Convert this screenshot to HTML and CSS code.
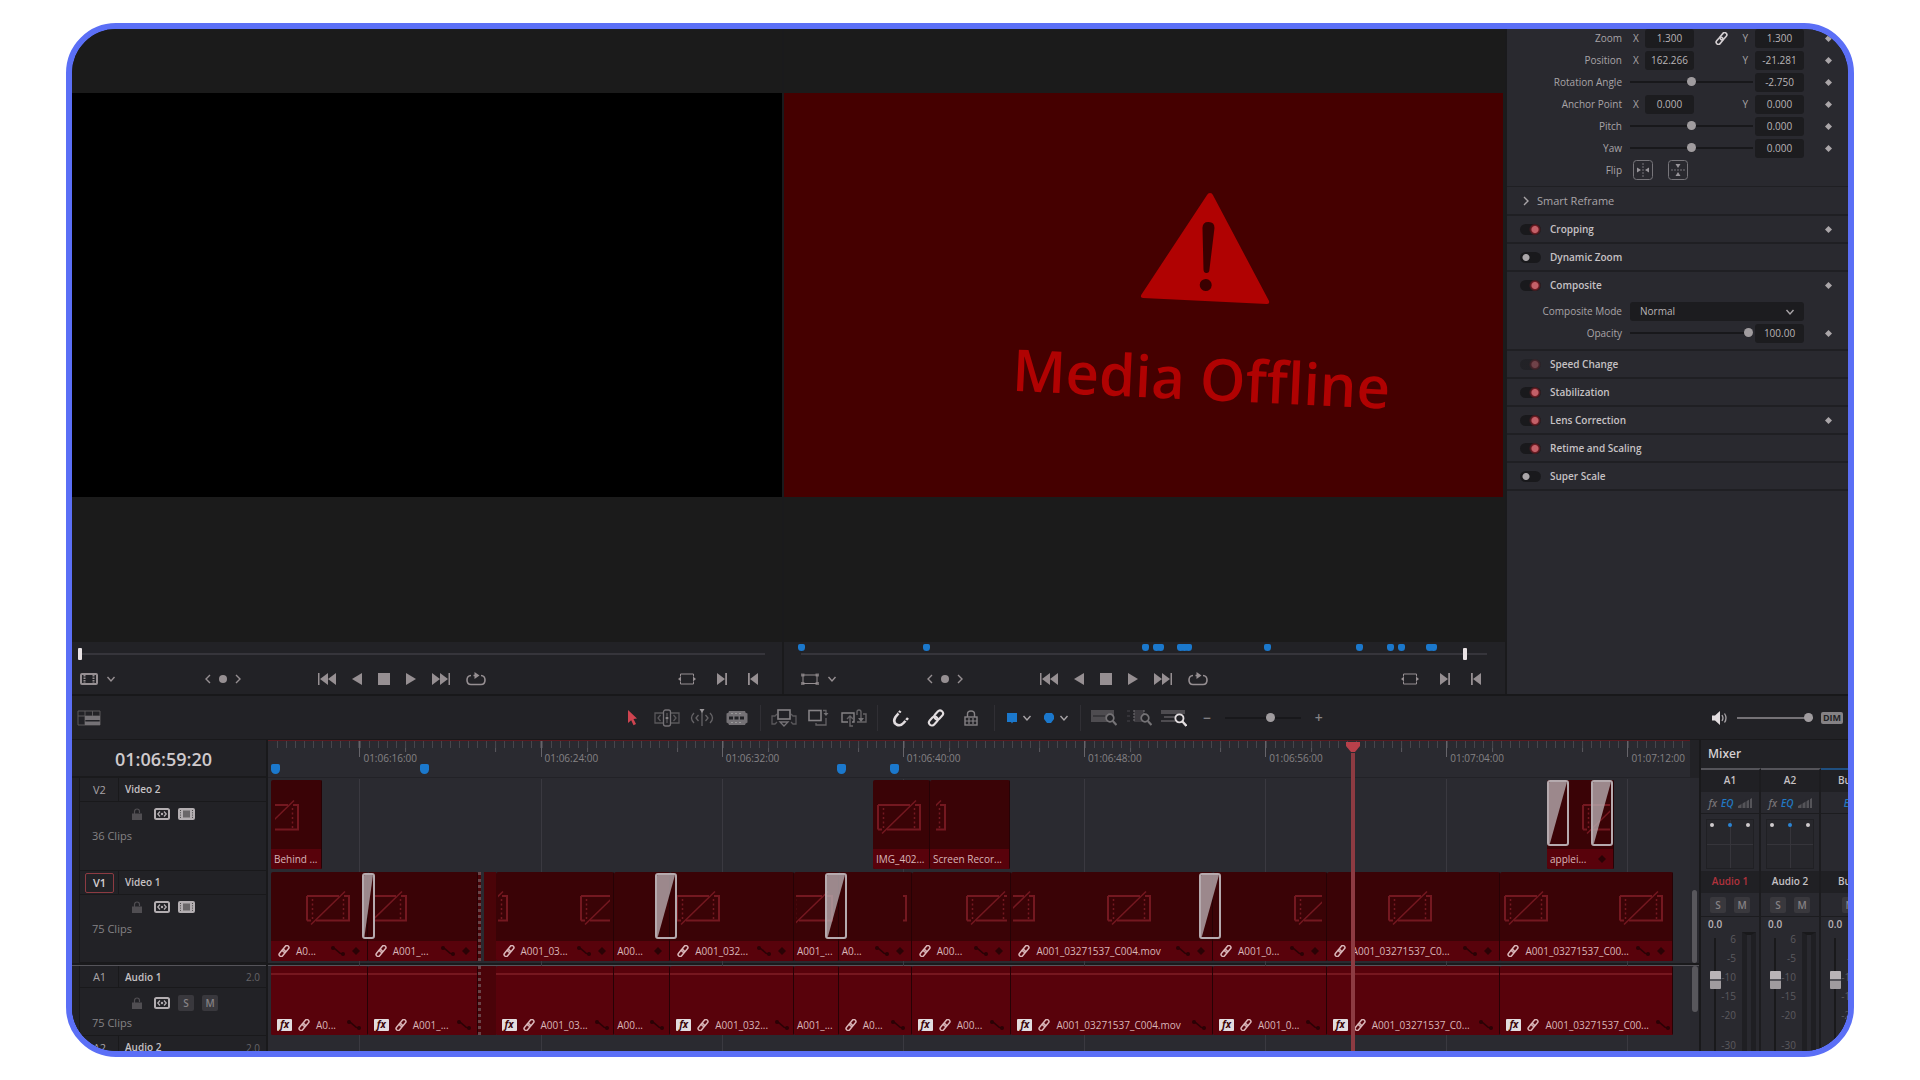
FILE: index.html
```html
<!DOCTYPE html>
<html lang="en">
<head>
<meta charset="utf-8">
<meta name="viewport" content="width=device-width, initial-scale=1">
<title>Edit page</title>
<link rel="stylesheet" href="styles.css">
</head>
<body>
<svg class="defs" aria-hidden="true">
  <defs>
    <symbol id="i-link" viewBox="0 0 12 12"><g fill="none" stroke="currentColor" stroke-width="1.500" transform="rotate(-50 6 6)"><rect x="-.5" y="4" width="7.500" height="4" rx="2"/><rect x="5" y="4" width="7.500" height="4" rx="2"/></g></symbol>
    <symbol id="i-curve" viewBox="0 0 16 12"><path d="M2 3c6 0 5 6 11 6" fill="none" stroke="currentColor" stroke-width="1.500"/><circle cx="3" cy="3" r="2"/><circle cx="13" cy="9" r="2"/></symbol>
    <symbol id="i-key" viewBox="0 0 10 10"><path d="M5 0l5 5-5 5-5-5z" fill="currentColor"/></symbol>
    <symbol id="i-chev" viewBox="0 0 10 10"><path d="M1.500 3L5 7l3.500-4" fill="none" stroke="currentColor" stroke-width="1.400"/></symbol>
    <symbol id="i-left" viewBox="0 0 6 10"><path d="M5 1L1 5l4 4" fill="none" stroke="currentColor" stroke-width="1.400"/></symbol>
    <symbol id="i-right" viewBox="0 0 6 10"><path d="M1 1l4 4-4 4" fill="none" stroke="currentColor" stroke-width="1.400"/></symbol>
    <symbol id="i-first" viewBox="0 0 18 12"><path d="M0 0h1.500v12H0zM10 0v12L2 6zM18 0v12l-8-6z" fill="currentColor"/></symbol>
    <symbol id="i-last" viewBox="0 0 18 12"><path d="M16.500 0H18v12h-1.500zM0 0l8 6-8 6zM8 0l8 6-8 6z" fill="currentColor"/></symbol>
    <symbol id="i-back" viewBox="0 0 10 12"><path d="M10 0v12L0 6z" fill="currentColor"/></symbol>
    <symbol id="i-play" viewBox="0 0 10 12"><path d="M0 0l10 6-10 6z" fill="currentColor"/></symbol>
    <symbol id="i-stop" viewBox="0 0 12 12"><path d="M0 0h12v12H0z" fill="currentColor"/></symbol>
    <symbol id="i-loop" viewBox="0 0 20 14"><path d="M5 3.500C2.500 3.500 1 5.500 1 8s1.500 4.500 4 4.500h10c2.500 0 4-2 4-4.500s-1.500-4.500-4-4.500M9.500 3.500h-2" fill="none" stroke="currentColor" stroke-width="1.600"/><path d="M8.500 0l5 3.500-5 3.500z" fill="currentColor"/></symbol>
    <symbol id="i-match" viewBox="0 0 18 12"><path d="M2.500 3.500V1h13v2.500M2.500 8.500V11h13V8.500" fill="none" stroke="currentColor"/><path d="M0 6l3-2.500v5zM18 6l-3-2.500v5z" fill="currentColor"/></symbol>
    <symbol id="i-out" viewBox="0 0 10 12"><path d="M0 0l8 6-8 6zM8.200 0H10v12H8.200z" fill="currentColor"/></symbol>
    <symbol id="i-in" viewBox="0 0 10 12"><path d="M10 0v12L2 6zM0 0h1.800v12H0z" fill="currentColor"/></symbol>
    <symbol id="i-film" viewBox="0 0 18 12"><rect x="1" y="1" width="16" height="10" rx="1" fill="none" stroke="currentColor" stroke-width="2"/><path d="M4.500 2v8M13.500 2v8" stroke="currentColor" stroke-width="2" stroke-dasharray="1.500 1"/></symbol>
    <symbol id="i-frame" viewBox="0 0 18 12"><rect x="2" y="2" width="14" height="8.500" fill="none" stroke="currentColor"/><path d="M0 .5h3.500v3H0zM14.500 .5H18v3h-3.500zM0 9h3.500v3H0zM14.500 9H18v3h-3.500z" fill="currentColor" opacity=".7"/></symbol>
    <symbol id="i-lock" viewBox="0 0 10 12"><path d="M2.500 6V3.500a2.500 2.500 0 0 1 5 0V5" fill="none" stroke="currentColor" stroke-width="1.200"/><path d="M0 5.500h10V12H0z" fill="currentColor"/></symbol>
    <symbol id="i-auto" viewBox="0 0 16 12"><rect x="1" y="1" width="14" height="10" rx="1.500" fill="none" stroke="currentColor" stroke-width="2"/><path d="M6 3.500L3.800 6 6 8.500M10 3.500L12.200 6 10 8.500" fill="none" stroke="currentColor" stroke-width="1.300"/><circle cx="8" cy="6" r="1.200" fill="currentColor"/></symbol>
    <symbol id="i-clip" viewBox="0 0 17 12"><rect width="17" height="12" rx="2" fill="currentColor"/><path d="M5 2.500h7v7H5z" fill="#6a6769"/><path d="M2.500 2v8M14.500 2v8" stroke="#4a4848" stroke-dasharray="1 1.300"/></symbol>
    <symbol id="i-zoomglass" viewBox="0 0 12 14"><circle cx="5" cy="5" r="3.800" fill="#222226" stroke="currentColor" stroke-width="1.700"/><path d="M7.800 8L11.500 12" stroke="currentColor" stroke-width="2.200"/></symbol>
    <g id="offline" fill="none" stroke="#741820" stroke-width="2"><path d="M1 6h32M38 6h5v24.500H10M1 30.500V6M1 30.500h4"/><path d="M5 34.500L39 1.500" stroke-width="1.500"/><path d="M6.500 9v20M37.500 9v20" stroke-width="1.500" stroke-dasharray="2 2.500"/></g>
    <g id="fade"><path d="M0 0h22L1 66H0z" fill="#b5aaae" fill-opacity=".8"/></g>
  </defs>
</svg>

<main class="app">
  <div class="upper">
    <section class="viewer" aria-label="Source viewer">
      <div class="stage"><div class="gap-top"></div><div class="picture"></div><div class="gap-bottom"></div></div>
      <div class="controls">
        <div class="scrub"><input type="range" min="0" max="1000" value="0" aria-label="Source position"></div>
        <div class="transport">
          <div class="set tight"><button aria-label="Clip view"><svg width="18" height="12"><use href="#i-film"/></svg></button><button aria-label="View menu"><svg width="10" height="10"><use href="#i-chev"/></svg></button></div>
          <i class="sp a"></i>
          <div class="set jog"><button aria-label="Previous"><svg width="6" height="10"><use href="#i-left"/></svg></button><span class="dot"></span><button aria-label="Next"><svg width="6" height="10"><use href="#i-right"/></svg></button></div>
          <i class="sp b"></i>
          <div class="set play"><button aria-label="First frame"><svg width="18" height="12"><use href="#i-first"/></svg></button><button aria-label="Reverse"><svg width="10" height="12"><use href="#i-back"/></svg></button><button aria-label="Stop"><svg width="12" height="12"><use href="#i-stop"/></svg></button><button aria-label="Play"><svg width="10" height="12"><use href="#i-play"/></svg></button><button aria-label="Last frame"><svg width="18" height="12"><use href="#i-last"/></svg></button><button aria-label="Loop"><svg width="20" height="14"><use href="#i-loop"/></svg></button></div>
          <i class="sp c"></i>
          <div class="set marks"><button aria-label="Match frame"><svg width="18" height="12"><use href="#i-match"/></svg></button><button aria-label="Mark in"><svg width="10" height="12"><use href="#i-out"/></svg></button><button aria-label="Mark out"><svg width="10" height="12"><use href="#i-in"/></svg></button></div>
        </div>
      </div>
    </section>

    <section class="viewer program" aria-label="Timeline viewer">
      <div class="stage"><div class="gap-top"></div>
        <div class="picture">
          <div class="warning">
            <svg width="130" height="110" viewBox="0 0 130 110"><path d="M65 1q2 0 3 2l61 103q1 3-2 3H3q-3 0-2-3L62 3q1-2 3-2z" fill="#b00202"/><path d="M59 36q0-6 6-6t6 6l-3 41q0 4-3 4t-3-4z" fill="#3a0000"/><circle cx="65" cy="93" r="6" fill="#3a0000"/></svg>
            <p>Media Offline</p>
          </div>
        </div>
        <div class="gap-bottom"></div></div>
      <div class="controls">
        <div class="scrub">
          <input type="range" min="0" max="1000" value="970" aria-label="Timeline position">
          <i class="mk" style="left:0%"></i><i class="mk" style="left:18.200%"></i><i class="mk" style="left:50.200%"></i><i class="mk" style="left:51.700%"></i><i class="mk" style="left:52.400%"></i><i class="mk" style="left:55.200%"></i><i class="mk" style="left:55.900%"></i><i class="mk" style="left:56.400%"></i><i class="mk" style="left:67.900%"></i><i class="mk" style="left:81.300%"></i><i class="mk" style="left:85.900%"></i><i class="mk" style="left:87.400%"></i><i class="mk" style="left:91.600%"></i><i class="mk" style="left:92.200%"></i>
        </div>
        <div class="transport">
          <div class="set tight"><button aria-label="Transform"><svg width="18" height="12"><use href="#i-frame"/></svg></button><button aria-label="View menu"><svg width="10" height="10"><use href="#i-chev"/></svg></button></div>
          <i class="sp a"></i>
          <div class="set jog"><button aria-label="Previous"><svg width="6" height="10"><use href="#i-left"/></svg></button><span class="dot"></span><button aria-label="Next"><svg width="6" height="10"><use href="#i-right"/></svg></button></div>
          <i class="sp b"></i>
          <div class="set play"><button aria-label="First frame"><svg width="18" height="12"><use href="#i-first"/></svg></button><button aria-label="Reverse"><svg width="10" height="12"><use href="#i-back"/></svg></button><button aria-label="Stop"><svg width="12" height="12"><use href="#i-stop"/></svg></button><button aria-label="Play"><svg width="10" height="12"><use href="#i-play"/></svg></button><button aria-label="Last frame"><svg width="18" height="12"><use href="#i-last"/></svg></button><button aria-label="Loop"><svg width="20" height="14"><use href="#i-loop"/></svg></button></div>
          <i class="sp c"></i>
          <div class="set marks"><button aria-label="Match frame"><svg width="18" height="12"><use href="#i-match"/></svg></button><button aria-label="Mark in"><svg width="10" height="12"><use href="#i-out"/></svg></button><button aria-label="Mark out"><svg width="10" height="12"><use href="#i-in"/></svg></button></div>
        </div>
      </div>
    </section>

    <aside class="inspector" aria-label="Inspector">
      <div class="params first">
        <div class="row"><label for="zx">Zoom</label><span>X</span><input id="zx" value="1.300"><span class="mid"><svg width="13" height="13"><use href="#i-link"/></svg>Y</span><input value="1.300" aria-label="Zoom Y"><svg class="kf" width="7" height="7"><use href="#i-key"/></svg></div>
        <div class="row"><label for="px">Position</label><span>X</span><input id="px" value="162.266"><span class="mid">Y</span><input value="-21.281" aria-label="Position Y"><svg class="kf" width="7" height="7"><use href="#i-key"/></svg></div>
        <div class="row"><label for="ra">Rotation Angle</label><input type="range" id="ra"><input value="-2.750" aria-label="Rotation Angle value"><svg class="kf" width="7" height="7"><use href="#i-key"/></svg></div>
        <div class="row"><label for="ax">Anchor Point</label><span>X</span><input id="ax" value="0.000"><span class="mid">Y</span><input value="0.000" aria-label="Anchor Point Y"><svg class="kf" width="7" height="7"><use href="#i-key"/></svg></div>
        <div class="row"><label for="pi">Pitch</label><input type="range" id="pi"><input value="0.000" aria-label="Pitch value"><svg class="kf" width="7" height="7"><use href="#i-key"/></svg></div>
        <div class="row"><label for="ya">Yaw</label><input type="range" id="ya"><input value="0.000" aria-label="Yaw value"><svg class="kf" width="7" height="7"><use href="#i-key"/></svg></div>
        <div class="row"><span class="lbl">Flip</span><div class="flips">
          <button aria-label="Flip horizontal"><svg width="20" height="20" viewBox="0 0 20 20"><rect x=".5" y=".5" width="19" height="19" rx="3" fill="none" stroke="#77757a"/><path d="M10 3v14" stroke="#77757a" stroke-dasharray="2 1"/><path d="M4 7.500L8 10l-4 2.500zM16 7.500L12 10l4 2.500z" fill="#98959a"/></svg></button>
          <button aria-label="Flip vertical"><svg width="20" height="20" viewBox="0 0 20 20"><rect x=".5" y=".5" width="19" height="19" rx="3" fill="none" stroke="#77757a"/><path d="M3 10h14" stroke="#77757a" stroke-dasharray="2 1"/><path d="M7.500 4L10 8l2.500-4zM7.500 16L10 12l2.500 4z" fill="#98959a"/></svg></button></div></div>
      </div>
      <div class="head reframe"><svg width="6" height="10"><use href="#i-right"/></svg>Smart Reframe</div>
      <div class="head"><label><input type="checkbox" checked>Cropping</label><svg class="kf" width="7" height="7"><use href="#i-key"/></svg></div>
      <div class="head"><label><input type="checkbox">Dynamic Zoom</label></div>
      <div class="head"><label><input type="checkbox" checked>Composite</label><svg class="kf" width="7" height="7"><use href="#i-key"/></svg></div>
      <div class="params">
        <div class="row"><label for="cm">Composite Mode</label><div class="pick"><select id="cm"><option>Normal</option></select><svg width="10" height="10"><use href="#i-chev"/></svg></div></div>
        <div class="row"><label for="op">Opacity</label><input type="range" id="op" value="100"><input value="100.00" aria-label="Opacity value"><svg class="kf" width="7" height="7"><use href="#i-key"/></svg></div>
      </div>
      <div class="head"><label><input type="checkbox" class="dim" checked>Speed Change</label></div>
      <div class="head"><label><input type="checkbox" checked>Stabilization</label></div>
      <div class="head"><label><input type="checkbox" checked>Lens Correction</label><svg class="kf" width="7" height="7"><use href="#i-key"/></svg></div>
      <div class="head"><label><input type="checkbox" checked>Retime and Scaling</label></div>
      <div class="head last"><label><input type="checkbox">Super Scale</label></div>
    </aside>
  </div>

  <div class="toolbar">
    <button aria-label="Timeline view options"><svg width="24" height="16" viewBox="0 0 24 16"><path d="M1 1h22v14H1zM1 6h22M8 1v14M15.500 1v5" fill="none" stroke="#5a585b"/><path d="M8 6h15v4H8zM8 11.500h15V15H8z" fill="#757276"/></svg></button>
    <i class="sp l"></i>
    <div class="tools">
      <button aria-label="Selection"><svg width="24" height="20" viewBox="0 0 24 20"><path d="M8 2l9 8.500-3.500.5 2.500 5-2.500 1.300-2.300-5L8 15z" fill="#cf4450"/></svg></button>
      <button aria-label="Trim"><svg width="26" height="18" viewBox="0 0 26 18"><g fill="none" stroke="#5a585b" stroke-width="1.300"><path d="M9 4H1v10h8M17 4h8v10h-8"/><rect x="9.500" y="1" width="7" height="16" rx="2" stroke="#757276"/><path d="M6.500 6L4 9l2.500 3M19.500 6L22 9l-2.500 3M13 4v3M13 11v3"/></g><circle cx="13" cy="9" r="1.500" fill="#858285"/></svg></button>
      <button aria-label="Dynamic trim"><svg width="24" height="18" viewBox="0 0 24 18"><g fill="none" stroke="#656366" stroke-width="1.300"><path d="M4 4Q-1 9 4 14M20 4q5 5 0 10M12 3v14M8.500 6L6 9l2.500 3M15.500 6L18 9l-2.500 3"/></g><path d="M9.500 0h5L12 4z" fill="#9a979a"/></svg></button>
      <button aria-label="Razor"><svg width="22" height="14" viewBox="0 0 22 14"><path d="M3 0h16q0 2 2.500 2.500v9Q19 12 19 14H3q0-2-2.500-2.500v-9Q3 2 3 0z" fill="#757276"/><path d="M3 7h16" stroke="#222226" stroke-width="3" stroke-dasharray="4 1.500"/><path d="M5 2.500h12M5 11.500h12" stroke="#999" stroke-dasharray="2 2"/></svg></button>
      <i class="rule"></i>
      <button aria-label="Insert clip"><svg width="26" height="18" viewBox="0 0 26 18"><g fill="none" stroke="#5a585b" stroke-width="1.300"><path d="M6 5l-2 2H1v8h3l2-2M20 5l2 2h3v8h-3l-2-2"/><rect x="7" y="1" width="12" height="9" stroke="#858285" stroke-width="1.600"/><path d="M9 13h8l-4 4z" stroke="#757276"/></g></svg></button>
      <button aria-label="Overwrite clip"><svg width="22" height="18" viewBox="0 0 22 18"><g fill="none" stroke="#656366" stroke-width="1.300"><rect x="1" y="1.500" width="12" height="10" stroke="#858285" stroke-width="1.600"/><path d="M18 9v7H8v-2M15 1.500h3v3"/></g><path d="M15.500 4h5L18 7z" fill="#757376"/></svg></button>
      <button aria-label="Replace clip"><svg width="26" height="18" viewBox="0 0 26 18"><g fill="none" stroke="#656366" stroke-width="1.400"><path d="M7 13H1V4h12v9h-2" stroke="#858285"/><path d="M16 6V3q0-2 2-2t2 2v7M16 13h9V5h-3"/><path d="M6 10l3-3 3 3M9 8v9h3"/></g><path d="M17 9h6l-3 4z" fill="#757376"/></svg></button>
      <i class="rule"></i>
      <button aria-label="Snapping"><svg width="18" height="18" viewBox="0 0 18 18"><path d="M8.500 2L3.500 8q-3 5 1 7.500 4 2 7-1.500L16 9" fill="none" stroke="#e2dddf" stroke-width="2.600"/><path d="M6 3.500l3.500 2M12.500 10.500l3 2" stroke="#222226" stroke-width="1.200"/></svg></button>
      <button aria-label="Linked selection"><svg width="18" height="18" viewBox="0 0 18 18"><g fill="none" stroke="#e2dddf" stroke-width="2.100" transform="rotate(-48 9 9)"><rect x="0" y="6" width="10" height="6" rx="3"/><rect x="8" y="6" width="10" height="6" rx="3"/></g></svg></button>
      <button aria-label="Position lock"><svg width="14" height="16" viewBox="0 0 14 16"><path d="M3.500 7V4q0-3 3.500-3t3.500 3v3" fill="none" stroke="#858285" stroke-width="1.400"/><rect x="1" y="7" width="12" height="8" fill="none" stroke="#858285" stroke-width="1.400"/><path d="M1 11h12M5 8v6M9 8v6" stroke="#858285" stroke-width="1.200"/></svg></button>
      <i class="rule"></i>
      <div class="drop"><button aria-label="Flag"><svg width="12" height="12"><path d="M1 1h10v9H7l-1 1.500L5 10H1z" fill="#1b78cc"/></svg></button><button aria-label="Flag colours"><svg width="10" height="10"><use href="#i-chev"/></svg></button></div>
      <div class="drop"><button aria-label="Marker"><svg width="12" height="12"><path d="M3 1h6l2 2.500V7L8 11H4L1 7V3.500z" fill="#1b78cc"/></svg></button><button aria-label="Marker colours"><svg width="10" height="10"><use href="#i-chev"/></svg></button></div>
      <i class="rule"></i>
      <button class="glass" aria-label="Full extent zoom"><svg width="26" height="18" viewBox="0 0 26 18"><path d="M0 1h23v12H0z" fill="#4e4c50"/><path d="M2 7h12" stroke="#222226"/><use href="#i-zoomglass" x="14" y="4" width="12" height="14"/></svg></button>
      <button class="glass" aria-label="Detail zoom"><svg width="26" height="18" viewBox="0 0 26 18"><path d="M1 2h3M1 7h3M1 12h3" stroke="#47454a"/><path d="M8 1h10v12H8z" fill="#3c3a3f"/><path d="M8 1v12M18 1v4" stroke="#757376" stroke-dasharray="2 1"/><use href="#i-zoomglass" x="14" y="4" width="12" height="14"/></svg></button>
      <button class="glass on" aria-label="Custom zoom"><svg width="26" height="18" viewBox="0 0 26 18"><path d="M0 1h24v4H0zM3 7h11v2H3zM0 11h14v2H0z" fill="#4e4c50"/><use href="#i-zoomglass" x="13" y="4" width="13" height="15"/></svg></button>
      <div class="zoomer"><button aria-label="Zoom out">−</button><input type="range" value="62" aria-label="Timeline zoom"><button aria-label="Zoom in">+</button></div>
    </div>
    <i class="sp r"></i>
    <div class="volume">
      <svg width="17" height="14" viewBox="0 0 17 14"><path d="M0 4.500h3L8 0v14L3 9.500H0z" fill="#e2dddf"/><path d="M10 4q2 3 0 6M12.500 2.500q3 4.500 0 9" fill="none" stroke="#a8a4a7" stroke-width="1.300"/></svg>
      <input type="range" value="100" aria-label="Volume"><button class="dimbtn">DIM</button>
    </div>
  </div>

  <div class="lower">
    <div class="heads">
      <div class="timecode">01:06:59:20</div>
      <div class="track v2"><div class="title"><b>V2</b><span>Video 2</span></div><div class="icons"><svg class="off" width="10" height="12"><use href="#i-lock"/></svg><svg width="16" height="12"><use href="#i-auto"/></svg><svg width="17" height="12"><use href="#i-clip"/></svg></div><p>36 Clips</p></div>
      <div class="track v1"><div class="title"><b class="sel">V1</b><span>Video 1</span></div><div class="icons"><svg class="off" width="10" height="12"><use href="#i-lock"/></svg><svg width="16" height="12"><use href="#i-auto"/></svg><svg width="17" height="12"><use href="#i-clip"/></svg></div><p>75 Clips</p></div>
      <div class="split"></div>
      <div class="track a1"><div class="title"><b>A1</b><span>Audio 1</span><em>2.0</em></div><div class="icons"><svg class="off" width="10" height="12"><use href="#i-lock"/></svg><svg width="16" height="12"><use href="#i-auto"/></svg><button>S</button><button>M</button></div><p>75 Clips</p></div>
      <div class="track a2"><div class="title"><b>A2</b><span>Audio 2</span><em>2.0</em></div></div>
    </div>

    <div class="canvas">
      <div class="gridlines"><i class="lead"></i><i></i><i></i><i></i><i></i><i></i><i></i><i></i><i class="tail"></i></div>
      <div class="ruler">
        <span class="lead"></span><span>01:06:16:00</span><span>01:06:24:00</span><span>01:06:32:00</span><span>01:06:40:00</span><span>01:06:48:00</span><span>01:06:56:00</span><span>01:07:04:00</span><span class="tail">01:07:12:00</span>
        <i class="flag" style="left:.500%"></i><i class="flag" style="left:11%"></i><i class="flag" style="left:40.300%"></i><i class="flag" style="left:44%"></i>
      </div>
      <div class="lane v2">
        <i style="flex-grow:3"></i>
        <div class="clip" style="flex-grow:51"><svg class="th" style="left:4px" width="24" height="36" viewBox="0 0 44 36" preserveAspectRatio="xMaxYMid slice"><use href="#offline"/></svg><div class="name short">Behind ...</div></div>
        <i style="flex-grow:551"></i>
        <div class="clip" style="flex-grow:57"><svg class="th" style="left:4px" width="44" height="36" viewBox="0 0 44 36"><use href="#offline"/></svg><div class="name short">IMG_402...</div></div>
        <div class="clip" style="flex-grow:80"><svg class="th" style="left:6px" width="10" height="36" viewBox="0 0 44 36" preserveAspectRatio="xMaxYMid slice"><use href="#offline"/></svg><div class="name short">Screen Recor...</div></div>
        <i style="flex-grow:537"></i>
        <div class="clip" style="flex-grow:67"><svg class="th" style="left:35px" width="28" height="36" viewBox="0 0 44 36" preserveAspectRatio="xMinYMid slice"><use href="#offline"/></svg><div class="name short">applei...<svg class="k" width="8" height="8"><use href="#i-key"/></svg></div></div>
        <i style="flex-grow:76"></i>
        <svg class="fade" style="left:89.950%" width="22" height="66" viewBox="0 0 22 66" preserveAspectRatio="none"><use href="#fade"/></svg>
        <svg class="fade" style="left:93.050%" width="22" height="66" viewBox="0 0 22 66" preserveAspectRatio="none"><use href="#fade"/></svg>
      </div>
      <div class="lane v1">
        <i style="flex-grow:3"></i>
        <div class="clip" style="flex-grow:97"><svg class="th" style="left:35px" width="44" height="36" viewBox="0 0 44 36"><use href="#offline"/></svg><div class="name"><svg width="12" height="12"><use href="#i-link"/></svg>A0...<svg class="c" width="16" height="12"><use href="#i-curve"/></svg><svg class="k" width="8" height="8"><use href="#i-key"/></svg></div></div>
        <div class="clip" style="flex-grow:110"><svg class="th" style="left:5px" width="34" height="36" viewBox="0 0 44 36" preserveAspectRatio="xMaxYMid slice"><use href="#offline"/></svg><div class="name"><svg width="12" height="12"><use href="#i-link"/></svg>A001_...<svg class="c" width="16" height="12"><use href="#i-curve"/></svg><svg class="k" width="8" height="8"><use href="#i-key"/></svg></div></div>
        <div class="hole" style="flex-grow:15"></div>
        <div class="clip" style="flex-grow:119"><svg class="th" style="left:2px" width="10" height="36" viewBox="0 0 44 36" preserveAspectRatio="xMaxYMid slice"><use href="#offline"/></svg><svg class="th" style="left:84px" width="30" height="36" viewBox="0 0 44 36" preserveAspectRatio="xMinYMid slice"><use href="#offline"/></svg><div class="name"><svg width="12" height="12"><use href="#i-link"/></svg>A001_03...<svg class="c" width="16" height="12"><use href="#i-curve"/></svg><svg class="k" width="8" height="8"><use href="#i-key"/></svg></div></div>
        <div class="clip" style="flex-grow:56"><div class="name short">A00...<svg class="k" width="8" height="8"><use href="#i-key"/></svg></div></div>
        <div class="clip" style="flex-grow:124"><svg class="th" style="left:6px" width="44" height="36" viewBox="0 0 44 36"><use href="#offline"/></svg><div class="name"><svg width="12" height="12"><use href="#i-link"/></svg>A001_032...<svg class="c" width="16" height="12"><use href="#i-curve"/></svg><svg class="k" width="8" height="8"><use href="#i-key"/></svg></div></div>
        <div class="clip" style="flex-grow:45"><svg class="th" style="left:2px" width="37" height="36" viewBox="0 0 44 36" preserveAspectRatio="xMaxYMid slice"><use href="#offline"/></svg><div class="name short">A001_...</div></div>
        <div class="clip" style="flex-grow:73"><svg class="th" style="left:64px" width="4" height="36" viewBox="0 0 44 36" preserveAspectRatio="xMaxYMid slice"><use href="#offline"/></svg><div class="name short">A0...<svg class="c" width="16" height="12"><use href="#i-curve"/></svg><svg class="k" width="8" height="8"><use href="#i-key"/></svg></div></div>
        <div class="clip" style="flex-grow:100"><svg class="th" style="left:54px" width="41" height="36" viewBox="0 0 44 36" preserveAspectRatio="xMinYMid slice"><use href="#offline"/></svg><div class="name"><svg width="12" height="12"><use href="#i-link"/></svg>A00...<svg class="c" width="16" height="12"><use href="#i-curve"/></svg><svg class="k" width="8" height="8"><use href="#i-key"/></svg></div></div>
        <div class="clip" style="flex-grow:202"><svg class="th" style="left:2px" width="22" height="36" viewBox="0 0 44 36" preserveAspectRatio="xMaxYMid slice"><use href="#offline"/></svg><svg class="th" style="left:96px" width="44" height="36" viewBox="0 0 44 36"><use href="#offline"/></svg><div class="name"><svg width="12" height="12"><use href="#i-link"/></svg>A001_03271537_C004.mov<svg class="c" width="16" height="12"><use href="#i-curve"/></svg><svg class="k" width="8" height="8"><use href="#i-key"/></svg></div></div>
        <div class="clip" style="flex-grow:114"><svg class="th" style="left:81px" width="28" height="36" viewBox="0 0 44 36" preserveAspectRatio="xMinYMid slice"><use href="#offline"/></svg><div class="name"><svg width="12" height="12"><use href="#i-link"/></svg>A001_0...<svg class="c" width="16" height="12"><use href="#i-curve"/></svg><svg class="k" width="8" height="8"><use href="#i-key"/></svg></div></div>
        <div class="clip" style="flex-grow:174"><svg class="th" style="left:61px" width="44" height="36" viewBox="0 0 44 36"><use href="#offline"/></svg><div class="name"><svg width="12" height="12"><use href="#i-link"/></svg>A001_03271537_C0...<svg class="c" width="16" height="12"><use href="#i-curve"/></svg><svg class="k" width="8" height="8"><use href="#i-key"/></svg></div></div>
        <div class="clip" style="flex-grow:173"><svg class="th" style="left:4px" width="44" height="36" viewBox="0 0 44 36"><use href="#offline"/></svg><svg class="th" style="left:119px" width="44" height="36" viewBox="0 0 44 36"><use href="#offline"/></svg><div class="name"><svg width="12" height="12"><use href="#i-link"/></svg>A001_03271537_C00...<svg class="c" width="16" height="12"><use href="#i-curve"/></svg><svg class="k" width="8" height="8"><use href="#i-key"/></svg></div></div>
        <i style="flex-grow:17"></i>
        <svg class="fade" style="left:6.600%" width="13" height="66" viewBox="0 0 22 66" preserveAspectRatio="none"><use href="#fade"/></svg>
        <svg class="fade" style="left:27.250%" width="22" height="66" viewBox="0 0 22 66" preserveAspectRatio="none"><use href="#fade"/></svg>
        <svg class="fade" style="left:39.150%" width="22" height="66" viewBox="0 0 22 66" preserveAspectRatio="none"><use href="#fade"/></svg>
        <svg class="fade" style="left:65.500%" width="22" height="66" viewBox="0 0 22 66" preserveAspectRatio="none"><use href="#fade"/></svg>
      </div>
      <div class="split"></div>
      <div class="lane a1">
        <i style="flex-grow:3"></i>
        <div class="clip" style="flex-grow:97"><div class="name"><b>fx</b><svg width="12" height="12"><use href="#i-link"/></svg>A0...<svg class="c" width="16" height="12"><use href="#i-curve"/></svg></div></div>
        <div class="clip" style="flex-grow:110"><div class="name"><b>fx</b><svg width="12" height="12"><use href="#i-link"/></svg>A001_...<svg class="c" width="16" height="12"><use href="#i-curve"/></svg></div></div>
        <div class="hole" style="flex-grow:15"></div>
        <div class="clip" style="flex-grow:119"><div class="name"><b>fx</b><svg width="12" height="12"><use href="#i-link"/></svg>A001_03...<svg class="c" width="16" height="12"><use href="#i-curve"/></svg></div></div>
        <div class="clip" style="flex-grow:56"><div class="name short">A00...<svg class="c" width="16" height="12"><use href="#i-curve"/></svg></div></div>
        <div class="clip" style="flex-grow:124"><div class="name"><b>fx</b><svg width="12" height="12"><use href="#i-link"/></svg>A001_032...<svg class="c" width="16" height="12"><use href="#i-curve"/></svg></div></div>
        <div class="clip" style="flex-grow:45"><div class="name short">A001_...</div></div>
        <div class="clip" style="flex-grow:73"><div class="name"><svg width="12" height="12"><use href="#i-link"/></svg>A0...<svg class="c" width="16" height="12"><use href="#i-curve"/></svg></div></div>
        <div class="clip" style="flex-grow:100"><div class="name"><b>fx</b><svg width="12" height="12"><use href="#i-link"/></svg>A00...<svg class="c" width="16" height="12"><use href="#i-curve"/></svg></div></div>
        <div class="clip" style="flex-grow:202"><div class="name"><b>fx</b><svg width="12" height="12"><use href="#i-link"/></svg>A001_03271537_C004.mov<svg class="c" width="16" height="12"><use href="#i-curve"/></svg></div></div>
        <div class="clip" style="flex-grow:114"><div class="name"><b>fx</b><svg width="12" height="12"><use href="#i-link"/></svg>A001_0...<svg class="c" width="16" height="12"><use href="#i-curve"/></svg></div></div>
        <div class="clip" style="flex-grow:174"><div class="name"><b>fx</b><svg width="12" height="12"><use href="#i-link"/></svg>A001_03271537_C0...<svg class="c" width="16" height="12"><use href="#i-curve"/></svg></div></div>
        <div class="clip" style="flex-grow:173"><div class="name"><b>fx</b><svg width="12" height="12"><use href="#i-link"/></svg>A001_03271537_C00...<svg class="c" width="16" height="12"><use href="#i-curve"/></svg></div></div>
        <i style="flex-grow:17"></i>
      </div>
      <div class="playhead" style="left:76.300%"><svg width="14" height="12"><path d="M0 1h14v4l-5 6H5L0 5z" fill="#b8404a"/></svg></div>
    </div>

    <div class="scrolls"><div class="bar video"><i></i></div><div class="split"></div><div class="bar audio"><i></i></div></div>

    <section class="mixer" aria-label="Mixer">
      <h2>Mixer</h2>
      <div class="strips">
        <div class="strip"><h3>A1</h3>
          <div class="fx"><i>fx</i><i class="eq">EQ</i><svg width="14" height="10" viewBox="0 0 14 10"><path d="M0 10V8l14-8v10z" fill="#555459"/><path d="M4 3v7M8 1v9M11.500 0v10" stroke="#29292f"/></svg></div>
          <div class="pan"><div><i></i><i class="now"></i><i></i></div></div>
          <h3 class="act">Audio 1</h3><div class="sm"><button>S</button><button>M</button></div>
          <div class="fader"><span>0.0</span><div class="slot"><i class="rail"></i><i class="knob"></i><ul><li>6</li><li>-5</li><li>-10</li><li>-15</li><li>-20</li><li class="low">-30</li></ul><i class="meter"></i></div></div></div>
        <div class="strip"><h3>A2</h3>
          <div class="fx"><i>fx</i><i class="eq">EQ</i><svg width="14" height="10" viewBox="0 0 14 10"><path d="M0 10V8l14-8v10z" fill="#555459"/><path d="M4 3v7M8 1v9M11.500 0v10" stroke="#29292f"/></svg></div>
          <div class="pan"><div><i></i><i class="now"></i><i></i></div></div>
          <h3>Audio 2</h3><div class="sm"><button>S</button><button>M</button></div>
          <div class="fader"><span>0.0</span><div class="slot"><i class="rail"></i><i class="knob"></i><ul><li>6</li><li>-5</li><li>-10</li><li>-15</li><li>-20</li><li class="low">-30</li></ul><i class="meter"></i></div></div></div>
        <div class="strip bus"><h3>Bus 1</h3>
          <div class="fx"><i class="eq">EQ</i></div>
          <div class="pan"></div>
          <h3>Bus 1</h3><div class="sm"><button>M</button></div>
          <div class="fader"><span>0.0</span><div class="slot"><i class="rail"></i><i class="knob"></i><ul><li>6</li><li>-5</li><li>-10</li><li>-15</li><li>-20</li><li class="low">-30</li></ul><i class="meter"></i></div></div></div>
      </div>
    </section>
  </div>
</main>
</body>
</html>
```
FILE: styles.css
```css
* { box-sizing: border-box; }
html, body { margin: 0; background: #fff; }
body { font: 10px/14px "Open Sans", "Noto Sans", sans-serif; color: #a8a4a7; }
button { padding: 0; border: 0; background: none; color: inherit; font: inherit; display: flex; align-items: center; justify-content: center; }
svg { display: block; flex: none; }
h2, h3, p, ul { margin: 0; padding: 0; font: inherit; list-style: none; }
.defs { position: absolute; width: 0; height: 0; }

.app { display: flex; flex-direction: column; height: calc(100vh - 46px); margin: 23px 66px; border: 6px solid #5b6ff6; border-radius: 50px; overflow: hidden; background: #1a1a1c; }
.upper { flex: 1; min-height: 0; display: flex; gap: 2px; border-bottom: 2px solid #18181a; }

/* range inputs */
input[type="range"] { appearance: none; background: none; margin: 0; height: 12px; min-width: 0; }
input[type="range"]::-webkit-slider-runnable-track { height: 2px; background: #18181b; }
input[type="range"]::-webkit-slider-thumb { appearance: none; width: 9px; height: 9px; margin-top: -4px; border-radius: 50%; background: #a09c9f; }

/* viewers */
.viewer { flex: 711 1 0; min-width: 0; display: flex; flex-direction: column; background: #1b1b1b; }
.viewer.program { flex-grow: 722; }
.stage { flex: 1; min-height: 0; display: flex; flex-direction: column; }
.gap-top { flex: 64 1 0; }
.gap-bottom { flex: 146 1 0; }
.picture { flex: none; height: 404px; background: #000; }
.program .picture { margin-right: 2px; background: #450000; display: flex; align-items: center; justify-content: center; padding: 10px 0 0 124px; }
.warning { display: flex; flex-direction: column; align-items: center; gap: 46px; transform: rotate(2.75deg); color: #b00202; }
.warning p { font-size: 58px; line-height: 60px; font-weight: 600; }
.controls { height: 52px; background: #222226; }
.scrub { position: relative; height: 23px; margin: 0 17px 0 6px; display: flex; align-items: center; }
.program .scrub { margin: 0 18px 0 17px; }
.scrub input { flex: 1; }
.scrub input::-webkit-slider-runnable-track { background: #36353b; }
.scrub input::-webkit-slider-thumb { width: 4px; height: 12px; margin-top: -5px; border-radius: 1px; background: #e8e2e4; }
.mk { position: absolute; top: 2px; width: 7px; height: 7px; margin-left: -3px; border-radius: 2px 2px 4px 4px; background: #1b78cc; }
.transport { display: flex; align-items: center; height: 28px; padding: 0 24px 0 8px; color: #968f92; }
.program .transport { padding-left: 17px; }
.set { display: flex; align-items: center; gap: 16px; }
.set.tight { gap: 8px; }
.set.jog { gap: 8px; }
.set.marks { gap: 21px; }
.dot { width: 8px; height: 8px; border-radius: 50%; background: #968f92; }
.sp.a { flex: 90 1 0; } .sp.b { flex: 77 1 0; } .sp.c { flex: 194 1 0; }
.sp.l { flex: 520 1 0; } .sp.r { flex: 384 1 0; }

/* inspector */
.inspector { flex: none; width: 341px; background: #29292f; overflow: hidden; }
.params { padding: 2px 0 5px; }
.params.first { margin-top: -4px; }
.row { display: grid; grid-template-columns: 115px 23px 49px 61px 49px 1fr; align-items: center; height: 22px; }
.row > label, .lbl { text-align: right; }
.row > span:not(.mid):not(.lbl) { text-align: center; padding-left: 5px; }
.mid { display: flex; align-items: center; justify-content: flex-end; gap: 14px; padding-right: 7px; }
.mid svg { color: #d2cdd0; }
.row input:not([type]) { width: 100%; height: 19px; padding: 0; border: 0; border-radius: 3px; background: #1c1c1f; color: #b9b4b7; font: inherit; text-align: center; }
.row input[type="range"] { grid-column: 2 / 5; margin: 0 2px 0 8px; }
.kf { justify-self: center; color: #aaa6a9; }
.row .kf { margin-left: 4px; }
.flips { grid-column: 2 / 6; display: flex; gap: 15px; padding-left: 11px; }
.pick { grid-column: 2 / 6; position: relative; margin-left: 8px; }
.pick select { appearance: none; width: 100%; height: 19px; padding: 0 10px; border: 0; border-radius: 3px; background: #1c1c1f; color: #b9b4b7; font: inherit; }
.pick svg { position: absolute; right: 9px; top: 5px; }
.head { display: flex; align-items: center; justify-content: space-between; height: 28px; padding: 0 16px 0 13px; border-top: 2px solid #1f1f23; color: #c6c1c4; font-weight: 600; }
.head.reframe { justify-content: flex-start; gap: 8px; padding-left: 16px; font-weight: 400; font-size: 11px; color: #a8a4a7; border-top-width: 1px; }
.head.last { height: 30px; border-bottom: 2px solid #1f1f23; }
.head label { display: flex; align-items: center; gap: 9px; }
.head input { appearance: none; width: 21px; height: 11px; margin: 0; border-radius: 6px; background: radial-gradient(circle at 6px 50%, #aaa6a9 3px, #19191c 4px); }
.head input:checked { background: radial-gradient(circle at 15px 50%, #c46068 3px, #6e1d24 4px, #19191c 6px); }
.head input.dim { opacity: .45; }

/* toolbar */
.toolbar { display: flex; align-items: center; height: 43px; padding: 0 5px; background: #222226; }
.tools { display: flex; align-items: center; gap: 11px; }
.tools > button { width: 24px; height: 24px; }
.rule { width: 1px; height: 26px; background: #302f34; }
.drop { display: flex; align-items: center; gap: 4px; }
.glass { color: #757376; }
.glass.on { color: #e2dddf; }
.zoomer { display: flex; align-items: center; gap: 8px; color: #858285; }
.zoomer button { width: 20px; font-size: 14px; font-weight: 600; }
.zoomer input { width: 76px; }
.volume { display: flex; align-items: center; gap: 8px; }
.volume input { width: 76px; }
.volume input::-webkit-slider-runnable-track { background: #757276; }
.dimbtn { width: 22px; height: 12px; border-radius: 2px; background: #858285; color: #222226; font-size: 9px; font-weight: 700; }

/* timeline */
.lower { flex: none; display: flex; height: 312px; border-top: 1px solid #19191b; background: #2a2a30; }
.heads { flex: none; width: 196px; border-right: 2px solid #19191b; background: #222226; }
.timecode { height: 38px; padding-left: 43px; border-bottom: 2px solid #1a1a1c; color: #cfcacd; font-size: 18px; line-height: 38px; font-weight: 600; }
.track { margin-left: 7px; border-left: 1px solid #19191b; border-bottom: 1px solid #19191b; }
.track.v2 { height: 93px; }
.track.v1 { height: 92px; }
.track.a1 { height: 70px; }
.track.a2 { border-bottom: 0; }
.split { height: 3px; background: #1a1a1c; border-bottom: 1px solid #55545a; }
.title { display: flex; align-items: center; height: 24px; border-bottom: 1px solid #19191b; }
.title b { flex: none; width: 29px; height: 20px; margin: 0 4px 0 5px; border: 1px solid transparent; border-radius: 2px; font-weight: 400; line-height: 18px; text-align: center; font-size: 11px; }
.title b.sel { border-color: #8d3b42; color: #d4cfd2; font-weight: 600; }
.title span { flex: 1; align-self: stretch; padding-left: 6px; border-left: 1px solid #19191b; color: #c6c1c4; line-height: 23px; font-weight: 600; }
.title em { padding-right: 6px; color: #666468; font-style: normal; }
.icons { display: flex; align-items: center; gap: 8px; height: 24px; padding-left: 52px; color: #b3aeb1; }
.icons svg:first-child { margin-right: 4px; }
.icons .off { color: #504e52; }
.icons button, .sm button { width: 16px; height: 16px; border-radius: 2px; background: #39383d; color: #858285; font-weight: 600; }
.track p { height: 22px; padding-left: 12px; line-height: 20px; color: #858285; font-size: 11px; }
.a1 .title { height: 22px; }
.a1 .icons { height: 30px; }
.a1 p { height: 16px; line-height: 10px; }

.canvas { position: relative; flex: 1; min-width: 0; background: #2a2a30; border-top: 1px solid #5a1a20; }
.gridlines, .ruler { display: flex; }
.gridlines { position: absolute; inset: 38px 0 0; }
.gridlines i, .ruler span { flex: 1269 1 0; min-width: 0; border-left: 1px solid #3a3940; }
.gridlines .lead, .ruler .lead { flex-grow: 637; border-left-color: transparent; }
.gridlines .tail, .ruler .tail { flex-grow: 434; }
.ruler { position: relative; height: 37px; border-bottom: 1px solid #222227; }
.ruler span { height: 16px; line-height: 34px; text-indent: 3px; border-color: #66646a; color: #858285; white-space: nowrap; background: repeating-linear-gradient(90deg, #47464c 0 1px, transparent 1px 9px) 0 0 / 100% 7px no-repeat, linear-gradient(90deg, #5a585e 1px, transparent 1px) 50% 0 / 90px 11px repeat-x; }
.ruler .lead { background: repeating-linear-gradient(270deg, #47464c 0 1px, transparent 1px 9px) 0 0 / 100% 7px no-repeat; }
.ruler .tail { background: repeating-linear-gradient(90deg, #47464c 0 1px, transparent 1px 9px) 0 0 / 100% 7px no-repeat; }
.flag { position: absolute; top: 23px; width: 9px; height: 10px; margin-left: -4px; border-radius: 2px 2px 5px 5px; background: #1b78cc; }
.lane { position: relative; display: flex; }
.lane > * { flex: 1 1 0; min-width: 0; }
.lane.v2 { height: 93px; padding: 2px 0; }
.lane.v1 { height: 92px; padding: 1px 0 2px; }
.lane.a1 { height: 69px; }
.clip { position: relative; display: flex; flex-direction: column; justify-content: flex-end; overflow: hidden; background: #3a0306; border-radius: 2px; }
.clip::after { content: ""; position: absolute; inset: 0 0 0 auto; width: 1px; background: #260205; }
.th { position: absolute; top: 19px; }
.v1 .th { top: 18px; }
.name { display: flex; align-items: center; gap: 6px; height: 20px; padding: 0 8px 0 7px; background: #58020b; color: #d9b6b9; white-space: nowrap; }
.a1 .name { padding: 0 6px; }
.name.short { padding-left: 3px; }
.name svg { color: #d9b6b9; }
.name .c, .name .k { margin-left: auto; color: #2a0205; fill: #2a0205; }
.name .c + .k { margin-left: 0; }
.a1 .clip { background: #58020b; }
.a1 .clip::before { content: ""; position: absolute; top: 7px; left: 0; right: 0; height: 2px; background: #76171f; }
.name b { flex: none; width: 15px; height: 12px; border-radius: 1px; background: #e2dddf; color: #3a0306; font-size: 10px; line-height: 11px; font-style: italic; text-align: center; }
.hole { background: linear-gradient(90deg, transparent 3px, #4a0408 3px); border-left: 3px dotted #6a4448; }
.a1 .hole { background: #4a0309; }
.lane > .fade { position: absolute; top: 2px; border: 2px solid #b5aaae; border-radius: 3px; }
.playhead { position: absolute; top: 0; bottom: 0; display: flex; flex-direction: column; align-items: center; width: 14px; margin-left: -7px; }
.playhead::after { content: ""; flex: 1; width: 4px; background: #8d3b42; }
.scrolls { flex: none; width: 11px; padding-top: 38px; background: #222226; border-right: 2px solid #19191b; }
.bar { height: 185px; padding: 0 2px; background: #29292f; }
.bar i { display: block; width: 6px; height: 46px; border-radius: 3px; background: #58575c; }
.bar.video { display: flex; align-items: flex-end; }
.bar.video i { height: 73px; }

/* mixer */
.mixer { flex: none; width: 147px; overflow: hidden; background: #29292f; }
.mixer h2 { height: 28px; padding-left: 7px; background: #222226; color: #d4cfd2; font-size: 12px; line-height: 27px; font-weight: 600; }
.strips { display: flex; }
.strip { flex: none; width: 60px; border-top: 2px solid #55545a; border-right: 2px solid #1c1c1f; }
.strip.bus { border-top-color: #1f4f80; }
.strip h3 { height: 22px; background: #202024; line-height: 21px; text-align: center; color: #c6c1c4; font-weight: 600; }
.strip .act { color: #b0323c; }
.strip.bus h3 { text-align: left; padding-left: 17px; }
.fx { display: flex; align-items: center; justify-content: center; gap: 4px; height: 22px; border-bottom: 1px solid #1c1c1f; font-weight: 600; }
.fx i { color: #757276; }
.fx .eq { color: #2278c2; }
.pan { height: 57px; padding: 5px; }
.pan div { display: flex; justify-content: space-between; height: 50px; padding: 3px; border: 1px solid #202024; background: linear-gradient(#36353b, #36353b) 50% 50% / 100% 1px no-repeat, linear-gradient(#36353b, #36353b) 50% 50% / 1px 100% no-repeat, #27272c; }
.pan i { width: 4px; height: 4px; border-radius: 50%; background: #cfcacd; }
.pan .now { background: #2a84d4; }
.sm { display: flex; align-items: center; justify-content: center; gap: 8px; height: 24px; border-bottom: 1px solid #1c1c1f; }
.fader { padding: 0 0 0 7px; }
.fader span { display: block; height: 15px; line-height: 15px; color: #b9b4b7; font-weight: 600; }
.slot { position: relative; display: flex; height: 120px; }
.rail { width: 2px; margin: 6px 0 0 6px; background: #19191b; }
.knob { position: absolute; left: 2px; top: 39px; width: 11px; height: 18px; border-radius: 1px; background: linear-gradient(#b9b4b7 8px, #55545a 8px 10px, #a09c9f 10px); }
.slot ul { width: 20px; text-align: right; color: #5c5a5f; }
.slot li { height: 19px; }
.slot .low { margin-top: 11px; }
.meter { width: 14px; margin: 0 0 0 6px; border-left: 5px solid #1f1f23; border-right: 5px solid #1f1f23; background: #29292f; border-top: 3px solid #19191b; }
```
